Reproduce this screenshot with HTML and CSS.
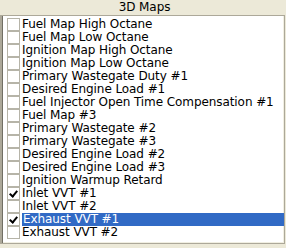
FILE: index.html
```html
<!DOCTYPE html>
<html lang="en">

<head>
    <meta charset="UTF-8">
    <title>3D Maps</title>
    <link rel="stylesheet" href="styles.css">
</head>

<body>

    <div class="panel">
        <div class="panel-title">3D Maps</div>
        <ul class="map-list">
            <li class="map-item"><span class="check"></span>Fuel Map High Octane</li>
            <li class="map-item"><span class="check"></span>Fuel Map Low Octane</li>
            <li class="map-item"><span class="check"></span>Ignition Map High Octane</li>
            <li class="map-item"><span class="check"></span>Ignition Map Low Octane</li>
            <li class="map-item"><span class="check"></span>Primary Wastegate Duty #1</li>
            <li class="map-item"><span class="check"></span>Desired Engine Load #1</li>
            <li class="map-item"><span class="check"></span>Fuel Injector Open Time Compensation #1</li>
            <li class="map-item"><span class="check"></span>Fuel Map #3</li>
            <li class="map-item"><span class="check"></span>Primary Wastegate #2</li>
            <li class="map-item"><span class="check"></span>Primary Wastegate #3</li>
            <li class="map-item"><span class="check"></span>Desired Engine Load #2</li>
            <li class="map-item"><span class="check"></span>Desired Engine Load #3</li>
            <li class="map-item"><span class="check"></span>Ignition Warmup Retard</li>
            <li class="map-item"><span class="check checked"></span>Inlet VVT #1</li>
            <li class="map-item"><span class="check"></span>Inlet VVT #2</li>
            <li class="map-item selected"><span class="check checked"></span><span class="label">Exhaust VVT #1</span></li>
            <li class="map-item"><span class="check"></span>Exhaust VVT #2</li>
        </ul>
    </div>

</body>

</html>
```

FILE: styles.css
```css
body {
    margin: 0;
    background-color: #ece9d8;
    font-family: 'DejaVu Sans', Tahoma, sans-serif;
    font-size: 12px;
    letter-spacing: -0.08px;
    color: #000;
}

.panel {
    width: 285px;
    height: 244px;
    display: flex;
    flex-direction: column;
}

.panel-title {
    height: 15px;
    line-height: 15px;
    text-align: center;
    padding-left: 4px;
    border-bottom: 1px solid #aca899;
    box-shadow: 0 1px 0 #716f64;
}

.map-list {
    list-style-type: none;
    margin: 0;
    padding: 2px 0 0 0;
    flex: 1;
    background-color: #fff;
    border-left: 2px solid #aca899;
    border-right: 1px solid #aca899;
    border-bottom: 1px solid #aca899;
    box-shadow: inset 1px 0 0 #716f64, inset -1px -1px 0 #f1efe2;
}

.map-item {
    height: 13px;
    line-height: 13px;
    display: flex;
    align-items: center;
    white-space: nowrap;
    padding-left: 5px;
}

.check {
    width: 11px;
    height: 11px;
    border: 1px solid #b6b4a8;
    margin-right: 2px;
    flex-shrink: 0;
    position: relative;
}

.check.checked::after {
    content: '';
    position: absolute;
    left: 3px;
    top: 1px;
    width: 3px;
    height: 6px;
    border: solid #000;
    border-width: 0 2px 2px 0;
    transform: rotate(40deg);
}

.selected {
    background: linear-gradient(to right, transparent 20px, #316ac5 20px);
    color: #fff;
}

.label {
    padding-left: 1px;
}
```
